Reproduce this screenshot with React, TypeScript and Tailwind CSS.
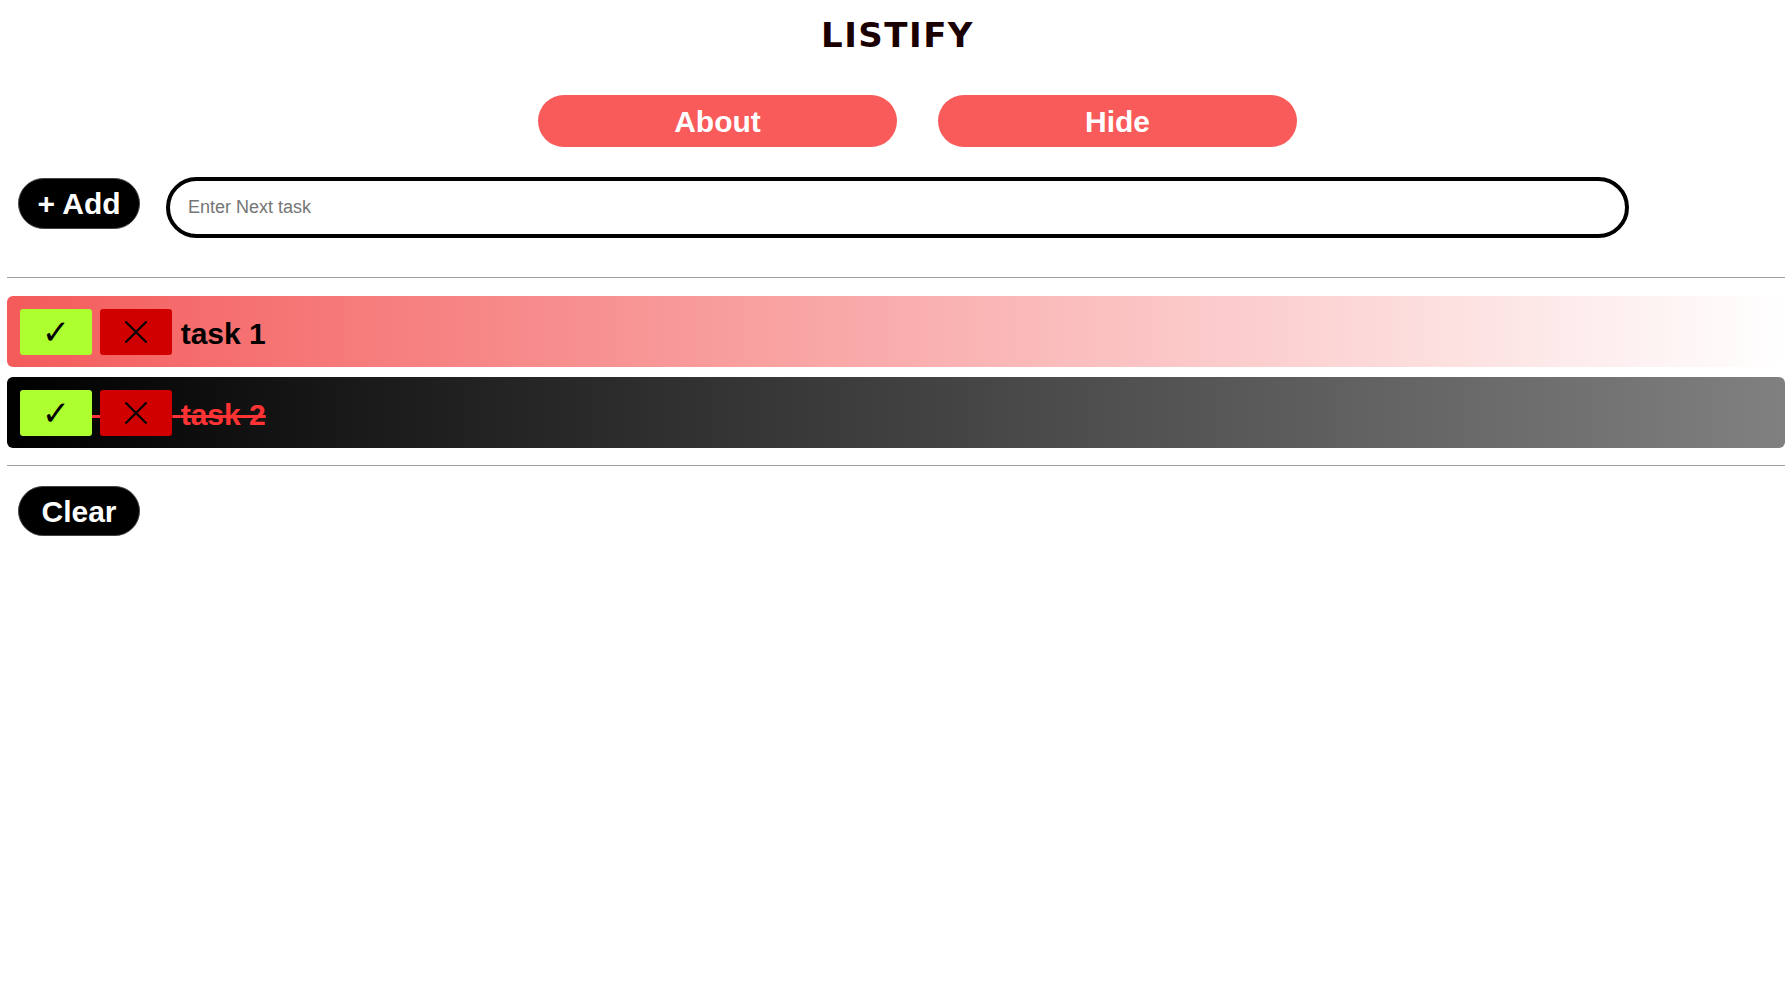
import { useState } from "react";

interface Task {
  id: number;
  text: string;
  done: boolean;
}

const initialTasks: Task[] = [
  { id: 1, text: "task 1", done: false },
  { id: 2, text: "task 2", done: true },
];

function CrossIcon() {
  return (
    <svg width="24" height="24" viewBox="0 0 24 24" fill="none">
      <path d="M1.5 1.5 L22.5 22.5 M22.5 1.5 L1.5 22.5" stroke="black" strokeWidth="2.2" />
    </svg>
  );
}

export default function App() {
  const [tasks, setTasks] = useState<Task[]>(initialTasks);
  const [input, setInput] = useState("");

  const addTask = () => {
    const text = input.trim();
    if (!text) return;
    setTasks((prev) => [...prev, { id: Date.now(), text, done: false }]);
    setInput("");
  };

  return (
    <div className="min-h-screen bg-white font-['Liberation_Sans',Arial,sans-serif]">
      {/* Header */}
      <h1 className="pt-[15px] pl-[10px] text-center font-['DejaVu_Sans',Verdana,sans-serif] text-[34px] leading-[40px] font-bold tracking-[1.5px] text-[#1a0000]">
        LISTIFY
      </h1>

      <div className="mt-[40px] flex justify-center gap-[41px] pl-[50px]">
        <button className="h-[52px] w-[359px] rounded-full bg-[#f95a5a] text-[30px] font-bold text-white">
          About
        </button>
        <button className="h-[52px] w-[359px] rounded-full bg-[#f95a5a] text-[30px] font-bold text-white">
          Hide
        </button>
      </div>

      {/* Input */}
      <div className="mt-[30px] flex items-start">
        <button
          onClick={addTask}
          className="ml-[18px] mt-[1px] h-[51px] w-[122px] rounded-full border border-[#444] bg-black text-[30px] font-bold text-white"
        >
          + Add
        </button>
        <input
          type="text"
          value={input}
          onChange={(e) => setInput(e.target.value)}
          placeholder="Enter Next task"
          className="ml-[26px] h-[61px] w-[1463px] rounded-full border-[4px] border-black pl-[18px] text-[18px] outline-none placeholder:text-[#757575]"
        />
      </div>

      <div className="mt-[39px] ml-[7px] h-px bg-[#a0a0a0]" />

      {/* Tasks */}
      <div className="mt-[18px] ml-[7px] flex flex-col gap-[10px]">
        {tasks.map((t) => (
          <div
            key={t.id}
            className={
              t.done
                ? "h-[71px] rounded-[6px] bg-[linear-gradient(to_right,#000000,#808080)] pl-[13px] pt-[13px] text-[30px] leading-[50px] font-bold whitespace-nowrap text-[#ff3333] line-through decoration-[#ff3333] decoration-[3px]"
                : "h-[71px] rounded-[6px] bg-[linear-gradient(to_right,#f45b5b,#ffffff)] pl-[13px] pt-[13px] text-[30px] leading-[50px] font-bold whitespace-nowrap text-black"
            }
          >
            <button
              onClick={() =>
                setTasks((prev) =>
                  prev.map((x) => (x.id === t.id ? { ...x, done: !x.done } : x))
                )
              }
              className="inline-flex h-[46px] w-[72px] items-center justify-center rounded-[3px] bg-[#adff2f] align-top font-['DejaVu_Sans',sans-serif] text-[34px] leading-none font-normal text-black"
            >
              ✓
            </button>{" "}
            <button
              onClick={() => setTasks((prev) => prev.filter((x) => x.id !== t.id))}
              className="inline-flex h-[46px] w-[72px] items-center justify-center rounded-[3px] bg-[#d00000] align-top"
            >
              <CrossIcon />
            </button>{" "}
            {t.text}
          </div>
        ))}
      </div>

      <div className="mt-[17px] ml-[7px] h-px bg-[#a0a0a0]" />

      <button
        onClick={() => setTasks([])}
        className="mt-[20px] ml-[18px] h-[50px] w-[122px] rounded-full border border-[#444] bg-black text-[30px] font-bold text-white"
      >
        Clear
      </button>
    </div>
  );
}
